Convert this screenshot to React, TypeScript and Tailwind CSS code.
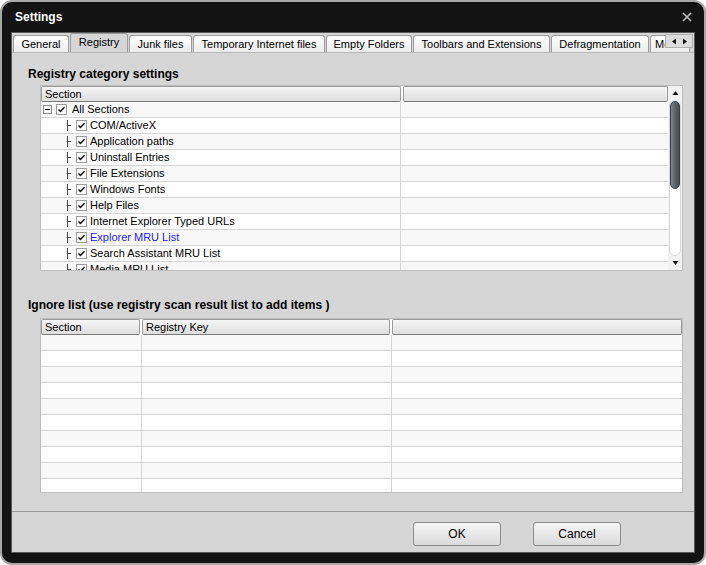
import React from "react";

const font = { fontFamily: '"Liberation Sans", Arial, sans-serif' };

const tabs = [
  { label: "General", w: 56 },
  { label: "Registry", w: 58, active: true },
  { label: "Junk files", w: 63 },
  { label: "Temporary Internet files", w: 132 },
  { label: "Empty Folders", w: 86 },
  { label: "Toolbars and Extensions", w: 137 },
  { label: "Defragmentation", w: 98 },
  { label: "Media", w: 40 },
];

const sections = [
  "COM/ActiveX",
  "Application paths",
  "Uninstall Entries",
  "File Extensions",
  "Windows Fonts",
  "Help Files",
  "Internet Explorer Typed URLs",
  "Explorer MRU List",
  "Search Assistant MRU List",
  "Media MRU List",
];

function Check() {
  return (
    <span className="flex h-[11px] w-[11px] shrink-0 items-center justify-center border border-[#9c9c9c] bg-white">
      <svg width="7" height="7" viewBox="0 0 7 7">
        <path d="M0.5 3.5 L2.5 5.5 L6.5 1.2" fill="none" stroke="#111" strokeWidth="1.5" />
      </svg>
    </span>
  );
}

function Tri({ dir }: { dir: "up" | "down" | "left" | "right" }) {
  const d = {
    up: "M0.5 5 L3.5 1 L6.5 5 Z",
    down: "M0.5 1 L3.5 5 L6.5 1 Z",
    left: "M5 0.5 L1 3.5 L5 6.5 Z",
    right: "M1 0.5 L5 3.5 L1 6.5 Z",
  }[dir];
  const vertical = dir === "up" || dir === "down";
  return (
    <svg width={vertical ? 7 : 6} height={vertical ? 6 : 7} viewBox={vertical ? "0 0 7 6" : "0 0 6 7"}>
      <path d={d} fill="#111" />
    </svg>
  );
}

function HeaderCell({ children, className }: { children?: React.ReactNode; className?: string }) {
  return (
    <div
      className={
        "flex h-[16px] items-center rounded-[2px] border border-[#9a9a9a] border-b-[#7a7a7a] bg-gradient-to-b from-[#f6f6f6] to-[#dedede] px-[3px] text-[11px] leading-none text-black " +
        (className ?? "")
      }
    >
      {children}
    </div>
  );
}

function Scrollbar() {
  return (
    <div className="flex w-[14px] shrink-0 flex-col items-center bg-[#f2f2f2]">
      <div className="flex h-[14px] w-full items-center justify-center">
        <Tri dir="up" />
      </div>
      <div className="flex w-[12px] flex-1 flex-col rounded-[6px] border border-[#d8d8d8] bg-white">
        <div className="h-[88px] w-full rounded-[6px] border border-[#3c4046] bg-gradient-to-r from-[#80858c] via-[#5e636a] to-[#4a4e54]" />
      </div>
      <div className="flex h-[14px] w-full items-center justify-center">
        <Tri dir="down" />
      </div>
    </div>
  );
}

export default function App() {
  return (
    <div className="h-[565px] w-[706px] bg-white" style={font}>
      <div className="flex h-full w-full flex-col rounded-[12px] border-2 border-[#a8a8a8] bg-[#131313]">
        {/* title bar */}
        <div className="flex h-[30px] shrink-0 items-center justify-between pl-[13px] pr-[12px]">
          <span className="text-[12px] font-bold text-white">Settings</span>
          <svg width="10" height="10" viewBox="0 0 10 10">
            <path d="M1 1 L9 9 M9 1 L1 9" stroke="#b8b8b8" strokeWidth="1.7" />
          </svg>
        </div>

        {/* client */}
        <div className="mx-[9px] mb-[10px] flex flex-1 flex-col border border-[#5a5a5a] bg-[#d6d6d6]">
          {/* tab strip */}
          <div className="relative flex h-[19px] shrink-0 items-end gap-[1px] overflow-hidden pl-[1px] pr-[2px]">
            {tabs.map((t) => (
              <div
                key={t.label}
                style={{ width: t.w }}
                className={
                  "flex shrink-0 items-center justify-center rounded-t-[3px] border border-b-0 border-[#9c9c9c] text-[11px] leading-none text-black " +
                  (t.active
                    ? "h-[19px] bg-[#d6d6d6] pb-[2px]"
                    : "h-[17px] bg-gradient-to-b from-white to-[#ececec]")
                }
              >
                {t.label}
              </div>
            ))}
            <div className="absolute right-[1px] top-[1px] flex h-[14px] w-[28px] items-center justify-center gap-[5px] border border-[#b0b0b0] bg-[#dcdcdc]">
              <Tri dir="left" />
              <Tri dir="right" />
            </div>
          </div>

          {/* panel */}
          <div className="flex flex-1 flex-col border-b border-[#9a9a9a] border-t border-t-[#b8b8b8]">
            <div className="ml-[16px] mt-[14px] text-[12px] font-bold leading-[14px] text-black">
              Registry category settings
            </div>

            <div className="ml-[28px] mt-[4px] flex h-[186px] w-[643px] border border-[#bdbdbd] bg-white">
              <div className="flex flex-1 flex-col overflow-hidden">
                <div className="flex gap-[2px]">
                  <HeaderCell className="w-[360px]">Section</HeaderCell>
                  <HeaderCell className="flex-1" />
                </div>
                <div className="flex flex-col">
                  <div className="flex h-[16px] shrink-0 border-b border-[#d6d6d6] bg-[#f8f8f8]">
                    <div className="flex w-[360px] items-center gap-[4px] border-r border-[#d6d6d6] pl-[2px] text-[11px] text-black">
                      <span className="flex h-[9px] w-[9px] items-center justify-center border border-[#8c8c8c] bg-white">
                        <span className="h-[1px] w-[5px] bg-black" />
                      </span>
                      <Check />
                      <span className="ml-[1px]">All Sections</span>
                    </div>
                    <div className="flex-1" />
                  </div>
                  {sections.map((s, i) => (
                    <div
                      key={s}
                      className={
                        "flex h-[16px] shrink-0 border-b border-[#d6d6d6] " +
                        (i % 2 === 0 ? "bg-white" : "bg-[#f8f8f8]")
                      }
                    >
                      <div className="flex w-[360px] items-center border-r border-[#d6d6d6] text-[11px] text-black">
                        <div className="relative ml-[26px] h-full w-[9px] shrink-0">
                          <span className="absolute left-0 top-[2px] h-[11px] w-[1px] bg-[#444]" />
                          <span className="absolute left-0 top-[7px] h-[1px] w-[4px] bg-[#444]" />
                        </div>
                        <Check />
                        <span className={"ml-[3px] " + (s === "Explorer MRU List" ? "text-[#2424f2]" : "")}>{s}</span>
                      </div>
                      <div className="flex-1" />
                    </div>
                  ))}
                </div>
              </div>
              <Scrollbar />
            </div>

            <div className="ml-[16px] mt-[27px] text-[12px] font-bold leading-[14px] text-black">
              Ignore list (use registry scan result list to add items )
            </div>

            <div className="ml-[28px] mt-[6px] flex h-[175px] w-[643px] flex-col overflow-hidden border border-[#bdbdbd] bg-white">
              <div className="flex gap-[2px]">
                <HeaderCell className="w-[99px]">Section</HeaderCell>
                <HeaderCell className="w-[248px]">Registry Key</HeaderCell>
                <HeaderCell className="flex-1" />
              </div>
              {Array.from({ length: 10 }).map((_, i) => (
                <div
                  key={i}
                  className={
                    "flex h-[16px] shrink-0 border-b border-[#d6d6d6] " + (i % 2 === 0 ? "bg-[#f8f8f8]" : "bg-white")
                  }
                >
                  <div className="w-[101px] border-r border-[#d6d6d6]" />
                  <div className="w-[250px] border-r border-[#d6d6d6]" />
                  <div className="flex-1" />
                </div>
              ))}
            </div>
          </div>

          {/* buttons */}
          <div className="flex h-[40px] shrink-0 items-center justify-end gap-[32px] pr-[73px] pt-[4px]">
            <button className="h-[24px] w-[88px] rounded-[3px] border border-[#8c8c8c] bg-gradient-to-b from-[#f6f6f6] to-[#dadada] text-[12px] text-black">
              OK
            </button>
            <button className="h-[24px] w-[88px] rounded-[3px] border border-[#8c8c8c] bg-gradient-to-b from-[#f6f6f6] to-[#dadada] text-[12px] text-black">
              Cancel
            </button>
          </div>
        </div>
      </div>
    </div>
  );
}
